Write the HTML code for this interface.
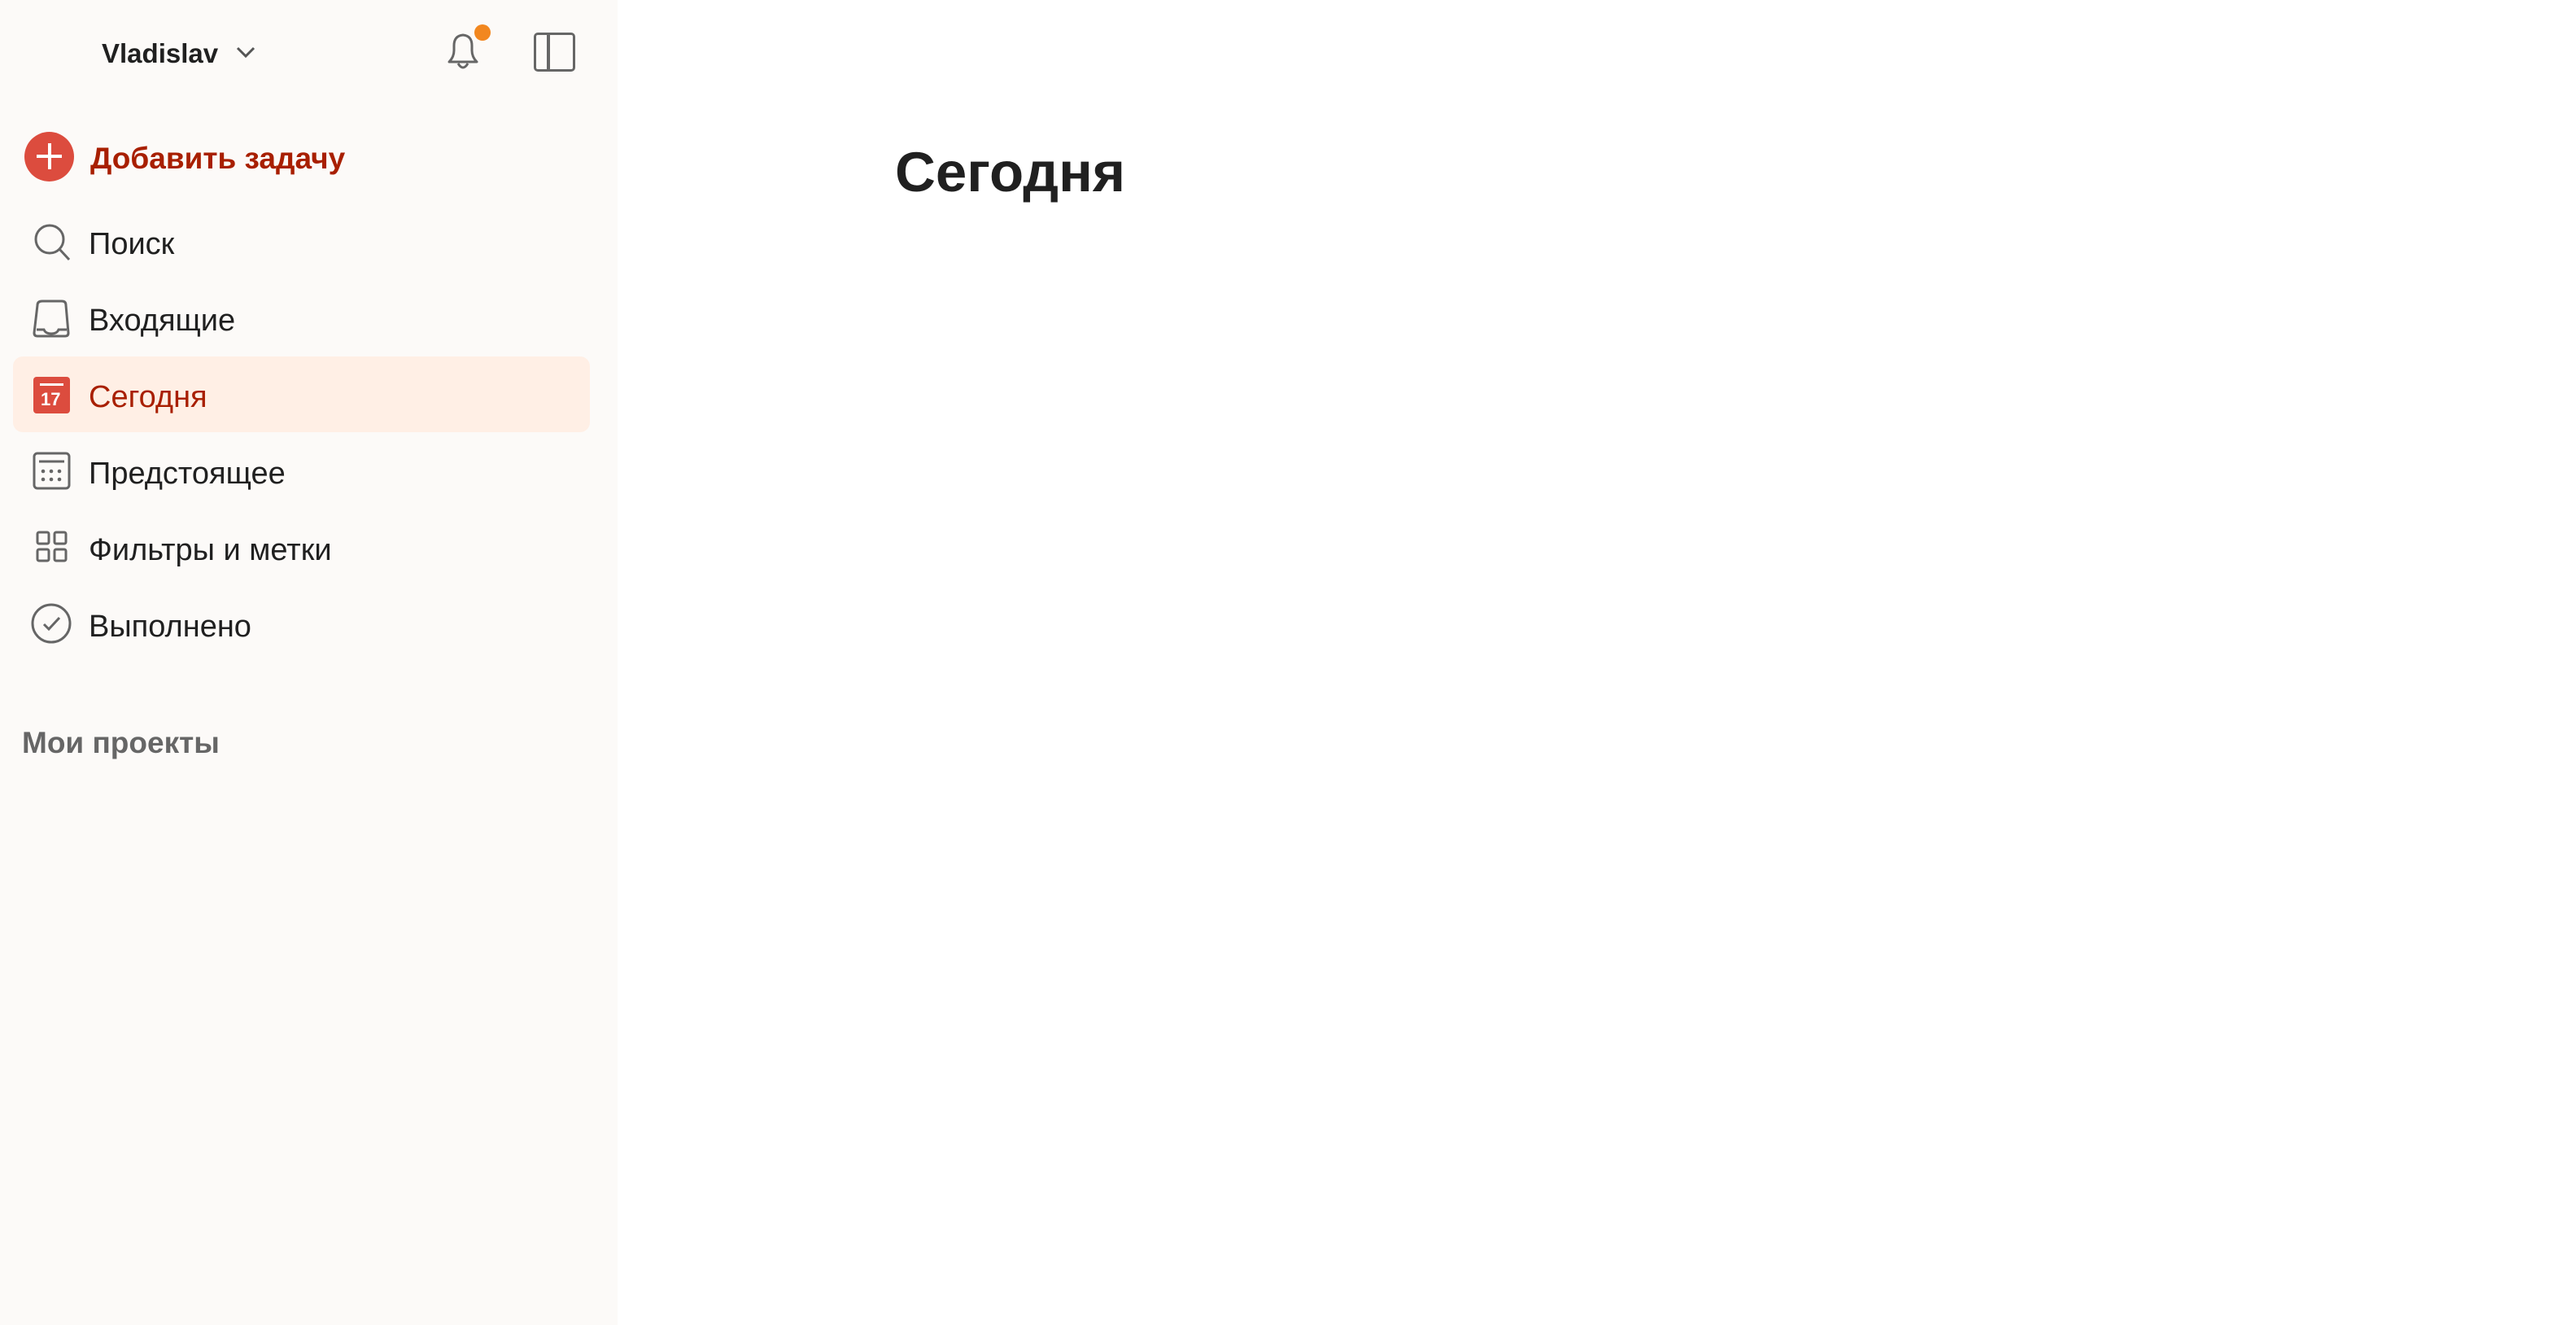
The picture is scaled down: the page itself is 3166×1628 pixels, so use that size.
<!DOCTYPE html>
<html><head><meta charset="utf-8"><style>
*{margin:0;padding:0;box-sizing:border-box}
body{width:3166px;height:1628px;background:#fff;font-family:"Liberation Sans",sans-serif;position:relative;overflow:hidden;color:#202020}
.sb{position:absolute;left:0;top:0;width:759px;height:1628px;background:#fcfaf8}
.a{position:absolute}
.t{position:absolute;font-size:38px;line-height:44px;white-space:nowrap}
svg{position:absolute;overflow:visible}
</style></head><body>
<div class="sb"></div>
<div class="t" style="left:125px;top:44px;font-weight:bold;font-size:33px;color:#202020">Vladislav</div>
<svg style="left:290px;top:57px" width="24" height="16"><path d="M2 2 L12 12 L22 2" fill="none" stroke="#555" stroke-width="3"/></svg>
<svg style="left:546px;top:38px" width="50" height="52" viewBox="0 0 50 52"><path d="M6 38 Q12 32 12 24 L12 18 Q12 6 23 5 Q34 6 34 18 L34 24 Q34 32 40 38 Z" fill="none" stroke="#666" stroke-width="3" stroke-linejoin="round"/><path d="M17 40 Q23 50 29 40" fill="none" stroke="#666" stroke-width="3"/></svg>
<div class="a" style="left:583px;top:30px;width:20px;height:20px;border-radius:50%;background:#f2871f"></div>
<div class="a" style="left:656px;top:40px;width:51px;height:48px;border:3.5px solid #666;border-radius:5px"></div>
<div class="a" style="left:672px;top:40px;width:3.5px;height:48px;background:#666"></div>

<div class="a" style="left:30px;top:162px;width:61px;height:61px;border-radius:50%;background:#dc4c3e"></div>
<div class="a" style="left:45px;top:190px;width:31px;height:4px;background:#fff"></div>
<div class="a" style="left:59px;top:176px;width:4px;height:32px;background:#fff"></div>
<div class="t" style="left:111px;top:173px;font-size:37px;font-weight:bold;color:#a81f00">Добавить задачу</div>

<svg style="left:40px;top:273px" width="50" height="50"><circle cx="21" cy="21" r="17" fill="none" stroke="#666" stroke-width="3"/><path d="M33 33 L45 46" stroke="#666" stroke-width="3"/></svg>
<div class="t" style="left:109px;top:278px">Поиск</div>

<svg style="left:40px;top:367px" width="48" height="50"><path d="M12 3 L36 3 Q41 3 41 8 L44 42 Q44 46 40 46 L6 46 Q2 46 2 42 L6 8 Q6 3 12 3 Z" fill="none" stroke="#666" stroke-width="3" stroke-linejoin="round"/><path d="M5 38 L14 38 Q16 43 23 43 Q30 43 32 38 L42 38" fill="none" stroke="#666" stroke-width="3"/></svg>
<div class="t" style="left:109px;top:372px">Входящие</div>

<div class="a" style="left:16px;top:438px;width:709px;height:93px;border-radius:12px;background:#ffefe5"></div>
<div class="a" style="left:41px;top:463px;width:45px;height:45px;border-radius:4px;background:#dc4c3e"></div>
<div class="a" style="left:49px;top:471px;width:29px;height:3px;background:#fff"></div>
<div class="a" style="left:50px;top:478px;font-size:22px;font-weight:bold;color:#fff">17</div>
<div class="t" style="left:109px;top:466px;color:#a81f00">Сегодня</div>

<svg style="left:40px;top:555px" width="48" height="50"><rect x="2" y="2" width="43" height="43" rx="4" fill="none" stroke="#666" stroke-width="3"/><path d="M8 12 L39 12" stroke="#666" stroke-width="3"/><g fill="#666"><circle cx="13" cy="24" r="2.3"/><circle cx="23" cy="24" r="2.3"/><circle cx="33" cy="24" r="2.3"/><circle cx="13" cy="34" r="2.3"/><circle cx="23" cy="34" r="2.3"/><circle cx="33" cy="34" r="2.3"/></g></svg>
<div class="t" style="left:109px;top:560px">Предстоящее</div>

<svg style="left:44px;top:652px" width="40" height="40"><g fill="none" stroke="#666" stroke-width="3"><rect x="2" y="2" width="14" height="14" rx="2"/><rect x="23" y="2" width="14" height="14" rx="2"/><rect x="2" y="23" width="14" height="14" rx="2"/><rect x="23" y="23" width="14" height="14" rx="2"/></g></svg>
<div class="t" style="left:109px;top:654px">Фильтры и метки</div>

<svg style="left:38px;top:741px" width="52" height="52"><circle cx="25" cy="25" r="23" fill="none" stroke="#666" stroke-width="3"/><path d="M16 26 L22 32 L35 18" fill="none" stroke="#666" stroke-width="3"/></svg>
<div class="t" style="left:109px;top:748px">Выполнено</div>

<div class="t" style="left:27px;top:891px;font-weight:bold;font-size:37px;color:#666">Мои проекты</div>

<div class="t" style="left:1100px;top:172px;font-size:69px;line-height:80px;font-weight:bold;color:#202020">Сегодня</div>
</body></html>
